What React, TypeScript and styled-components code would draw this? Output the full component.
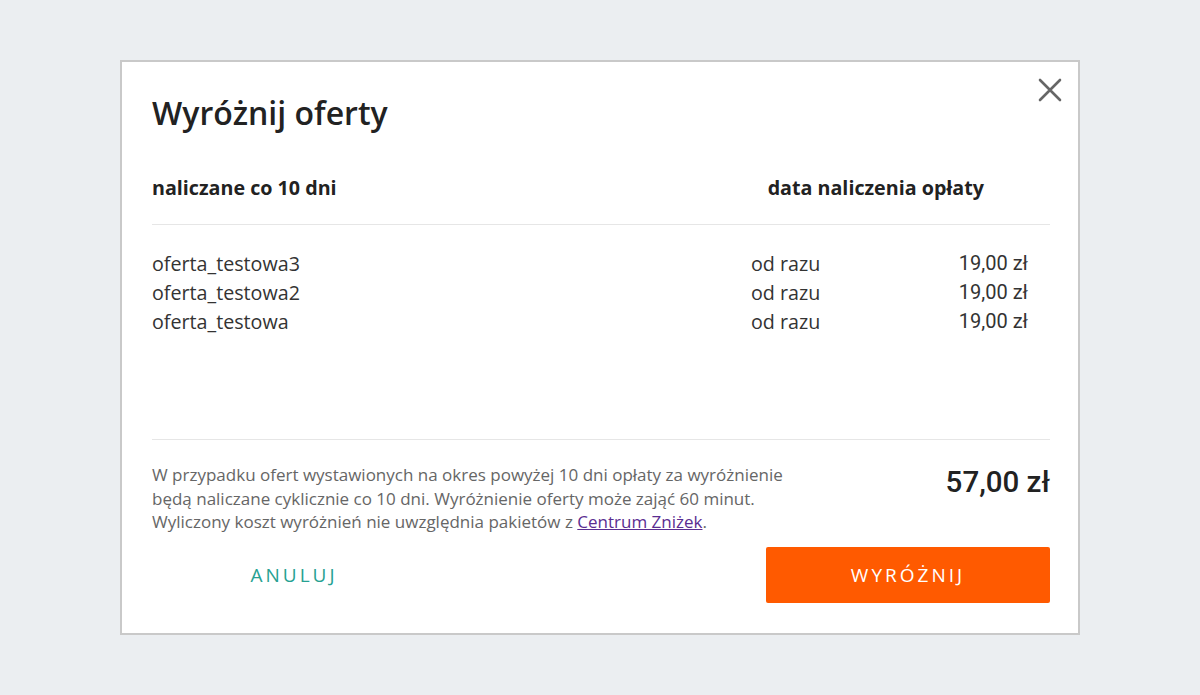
import React from 'react';
import styled, { createGlobalStyle } from 'styled-components';

const GlobalStyle = createGlobalStyle`
  html, body {
    margin: 0;
    padding: 0;
    background: #ebeef1;
    font-family: 'Open Sans', 'Liberation Sans', sans-serif;
    color: #222;
  }
  * { box-sizing: border-box; }
`;

interface Offer {
  name: string;
  when: string;
  price: string;
}

const offers: Offer[] = [
  { name: 'oferta_testowa3', when: 'od razu', price: '19,00 zł' },
  { name: 'oferta_testowa2', when: 'od razu', price: '19,00 zł' },
  { name: 'oferta_testowa', when: 'od razu', price: '19,00 zł' },
];

const App: React.FC = () => {
  return (
    <>
      <GlobalStyle />
      <Page>
        <Dialog>
          <CloseButton type="button" aria-label="Zamknij">
            <svg width="24" height="24" viewBox="0 0 24 24">
              <path d="M2 2 L22 22 M22 2 L2 22" stroke="#666" strokeWidth="2.6" strokeLinecap="round" />
            </svg>
          </CloseButton>
          <Title>Wyróżnij oferty</Title>
          <HeaderRow>
            <HeaderCell>naliczane co 10 dni</HeaderCell>
            <HeaderCell>data naliczenia opłaty</HeaderCell>
          </HeaderRow>
          <OfferList>
            {offers.map((o) => (
              <OfferRow key={o.name}>
                <span>{o.name}</span>
                <span>{o.when}</span>
                <Price>{o.price}</Price>
              </OfferRow>
            ))}
          </OfferList>
          <Summary>
            <Note>
              W przypadku ofert wystawionych na okres powyżej 10 dni opłaty za wyróżnienie
              będą naliczane cyklicznie co 10 dni. Wyróżnienie oferty może zająć 60 minut.
              Wyliczony koszt wyróżnień nie uwzględnia pakietów z <NoteLink href="#">Centrum Zniżek</NoteLink>.
            </Note>
            <Total>57,00 zł</Total>
          </Summary>
          <Actions>
            <ActionButton type="button" $variant="ghost">ANULUJ</ActionButton>
            <ActionButton type="button" $variant="primary">WYRÓŻNIJ</ActionButton>
          </Actions>
        </Dialog>
      </Page>
    </>
  );
};

export default App;

const Page = styled.div`
  min-height: 100vh;
  display: flex;
  align-items: center;
  justify-content: center;
`;

const Dialog = styled.div`
  position: relative;
  width: 960px;
  height: 575px;
  background: #fff;
  border: 2px solid #c9c9c9;
  padding: 29px 28px 0 30px;
  display: flex;
  flex-direction: column;
`;

const CloseButton = styled.button`
  position: absolute;
  top: 16px;
  right: 16px;
  width: 24px;
  height: 24px;
  padding: 0;
  border: none;
  background: transparent;
  cursor: pointer;
  display: flex;
`;

const Title = styled.h1`
  margin: 0;
  font-size: 32px;
  line-height: 44px;
  font-weight: 600;
  color: #222;
`;

const HeaderRow = styled.div`
  display: flex;
  justify-content: space-between;
  padding: 40px 66px 23px 0;
  border-bottom: 1px solid #e6e6e6;
`;

const HeaderCell = styled.span`
  font-size: 19.7px;
  line-height: 26px;
  font-weight: 700;
  color: #222;
`;

const OfferList = styled.div`
  height: 215px;
  padding: 24px 22px 0 0;
  border-bottom: 1px solid #e6e6e6;
`;

const OfferRow = styled.div`
  display: grid;
  grid-template-columns: 1fr 170px 107px;
  font-size: 19.7px;
  line-height: 29px;
  color: #333;
`;

const Price = styled.span`
  text-align: right;
  font-family: Roboto, 'Open Sans', sans-serif;
  font-size: 20px;
`;

const Summary = styled.div`
  display: flex;
  justify-content: space-between;
  align-items: flex-start;
  padding-top: 23px;
`;

const Note = styled.p`
  margin: 0;
  width: 650px;
  font-size: 17px;
  line-height: 23.5px;
  color: #666;
`;

const NoteLink = styled.a`
  color: #5a2d91;
  text-decoration: underline;
`;

const Total = styled.span`
  font-family: Roboto, 'Open Sans', sans-serif;
  font-size: 29.5px;
  font-weight: 500;
  line-height: 36px;
  color: #222;
  margin-top: 1px;
`;

const Actions = styled.div`
  display: flex;
  justify-content: space-between;
  margin-top: 13px;
`;

const ActionButton = styled.button<{ $variant: 'ghost' | 'primary' }>`
  width: 284px;
  height: 56px;
  border: none;
  border-radius: 2px;
  font-family: 'Open Sans', sans-serif;
  font-size: 19px;
  letter-spacing: 3px;
  cursor: pointer;
  background: ${(p) => (p.$variant === 'primary' ? '#ff5a00' : 'transparent')};
  color: ${(p) => (p.$variant === 'primary' ? '#fff' : '#27a192')};
`;
